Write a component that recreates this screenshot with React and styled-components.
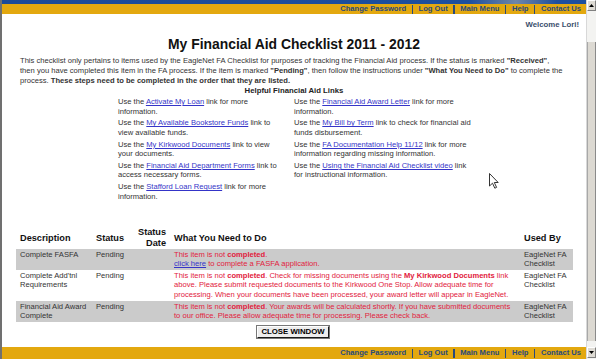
import React from "react";
import styled, { createGlobalStyle } from "styled-components";

const GlobalStyle = createGlobalStyle`
  html, body { margin: 0; padding: 0; }
  body {
    font-family: "Liberation Sans", Arial, sans-serif;
    background: #ffffff;
    overflow: hidden;
  }
`;

const Frame = styled.div`
  position: relative;
  display: flex;
  width: 596px;
  height: 359px;
  overflow: hidden;
  background: #fff;
`;

const LeftEdge = styled.div`
  width: 2px;
  background: #707070;
  flex: none;
`;

const Page = styled.div`
  flex: 1;
  min-width: 0;
  display: flex;
  flex-direction: column;
`;

const TopBand = styled.div`
  height: 4px;
  background: linear-gradient(90deg, #1b4a98 0%, #1d4f9e 80%, #6f86a8 88%, #1d4f9e 95%);
`;

const NavBar = styled.nav`
  display: flex;
  justify-content: flex-end;
  align-items: center;
  height: ${(p) => (p.$bottom ? "12px" : "10px")};
  padding-right: 5px;
  background: #e3a80f;
  margin-top: ${(p) => (p.$bottom ? "auto" : "0")};
`;

const NavLink = styled.a`
  font-size: 7.6px;
  font-weight: bold;
  color: #284a7c;
  text-decoration: none;
  line-height: 10px;
  white-space: nowrap;
`;

const NavSep = styled.span`
  display: inline-block;
  width: 1.5px;
  height: 9px;
  background: #284a7c;
  margin: 0 5.5px;
`;

const Welcome = styled.div`
  text-align: right;
  padding-right: 7px;
  margin-top: 6px;
  font-size: 7.8px;
  font-weight: bold;
  color: #3a4e6c;
  line-height: 10px;
`;

const Title = styled.h1`
  margin: 6px 0 0;
  text-align: center;
  font-size: 13.9px;
  font-weight: bold;
  color: #111;
  line-height: 16px;
`;

const Intro = styled.p`
  margin: 4px 0 0;
  padding-left: 18px;
  font-size: 7.6px;
  line-height: 10px;
  color: #333;
  white-space: nowrap;
`;

const LinksHeading = styled.div`
  text-align: center;
  font-size: 7.75px;
  font-weight: bold;
  color: #222;
  line-height: 10px;
`;

const LinksGrid = styled.div`
  display: grid;
  grid-template-columns: 170px 176px;
  column-gap: 6px;
  justify-content: center;
  margin-top: 1px;
`;

const LinkCol = styled.div`
  display: flex;
  flex-direction: column;
  gap: 2.3px;
`;

const LinkItem = styled.div`
  font-size: 7.6px;
  line-height: 9.5px;
  color: #333;
  white-space: nowrap;
`;

const A = styled.a`
  color: #3434c8;
  text-decoration: underline;
`;

const Table = styled.div`
  margin: 26px 0 0 14px;
  width: 557px;
`;

const Row = styled.div`
  display: grid;
  grid-template-columns: 76px 42px 36px 350px 53px;
  background: ${(p) => (p.$shaded ? "#cbcbcb" : "transparent")};
  padding: ${(p) => (p.$head ? "0" : "1px 0")};
  align-items: ${(p) => (p.$head ? "center" : "start")};
`;

const HeadCell = styled.div`
  padding: 0 4px;
  font-size: 9.2px;
  font-weight: bold;
  line-height: 10.7px;
  color: #111;
  text-align: ${(p) => (p.$right ? "right" : "left")};
  white-space: nowrap;
`;

const Cell = styled.div`
  padding: 0 4px;
  font-size: 7.6px;
  line-height: 9.6px;
  color: ${(p) => (p.$alert ? "#e2213d" : "#333")};
  white-space: ${(p) => (p.$nowrap ? "nowrap" : "normal")};
`;

const ButtonRow = styled.div`
  display: flex;
  justify-content: center;
  margin-top: 4px;
  padding-right: 2px;
`;

const CloseButton = styled.button`
  font-family: "Liberation Sans", Arial, sans-serif;
  font-size: 7.8px;
  font-weight: bold;
  color: #000;
  height: 12px;
  padding: 0 3px;
  line-height: 9px;
  background: #ededed;
  border: 1px solid;
  border-color: #fff #1a1a1a #1a1a1a #fff;
  box-shadow: 0 0 0 1px #777;
  cursor: default;
`;

const Scrollbar = styled.div`
  width: 10px;
  flex: none;
  display: flex;
  flex-direction: column;
  background: #f3f3f1;
  border-left: 1px solid #d8d8d8;
  box-sizing: border-box;
`;

const ScrollArrow = styled.div`
  height: 11px;
  display: flex;
  align-items: center;
  justify-content: center;
  background: #dedbd4;
  border: 1px solid;
  border-color: #fff #808080 #808080 #fff;
  box-sizing: border-box;
  margin-top: ${(p) => (p.$down ? "6px" : "0")};
`;

const ScrollThumb = styled.div`
  margin-top: 31px;
  height: 299px;
  background: #dcd9d2;
  border-left: 1px solid #a8a8a8;
  border-right: 1px solid #8a8a8a;
  box-sizing: border-box;
`;

const Cursor = styled.svg`
  position: absolute;
  left: 489px;
  top: 173px;
  pointer-events: none;
`;

const Strong = styled.b`
  font-weight: bold;
`;

function Nav({ bottom }) {
  const items = ["Change Password", "Log Out", "Main Menu", "Help", "Contact Us"];
  return (
    <NavBar $bottom={bottom}>
      {items.map((t, i) => (
        <React.Fragment key={t}>
          {i > 0 && <NavSep />}
          <NavLink href="#">{t}</NavLink>
        </React.Fragment>
      ))}
    </NavBar>
  );
}

const Tri = ({ down }) => (
  <svg width="5" height="3" viewBox="0 0 5 3">
    <path d={down ? "M0 0 H5 L2.5 3 Z" : "M0 3 H5 L2.5 0 Z"} fill="#000" />
  </svg>
);

export default function App() {
  return (
    <>
      <GlobalStyle />
      <Frame>
        <LeftEdge />
        <Page>
          <TopBand />
          <Nav />
          <Welcome>Welcome Lori!</Welcome>
          <Title>My Financial Aid Checklist 2011 - 2012</Title>
          <Intro>
            This checklist only pertains to items used by the EagleNet FA Checklist for purposes of tracking the Financial Aid process. If the status is marked <Strong>"Received"</Strong>,
            <br />
            then you have completed this item in the FA process. If the item is marked <Strong>"Pending"</Strong>, then follow the instructions under <Strong>"What You Need to Do"</Strong> to complete the
            <br />
            process. <Strong>These steps need to be completed in the order that they are listed.</Strong>
          </Intro>
          <LinksHeading>Helpful Financial Aid Links</LinksHeading>
          <LinksGrid>
            <LinkCol>
              <LinkItem>Use the <A href="#">Activate My Loan</A> link for more<br />information.</LinkItem>
              <LinkItem>Use the <A href="#">My Available Bookstore Funds</A> link to<br />view available funds.</LinkItem>
              <LinkItem>Use the <A href="#">My Kirkwood Documents</A> link to view<br />your documents.</LinkItem>
              <LinkItem>Use the <A href="#">Financial Aid Department Forms</A> link to<br />access necessary forms.</LinkItem>
              <LinkItem>Use the <A href="#">Stafford Loan Request</A> link for more<br />information.</LinkItem>
            </LinkCol>
            <LinkCol>
              <LinkItem>Use the <A href="#">Financial Aid Award Letter</A> link for more<br />information.</LinkItem>
              <LinkItem>Use the <A href="#">My Bill by Term</A> link to check for financial aid<br />funds disbursement.</LinkItem>
              <LinkItem>Use the <A href="#">FA Documentation Help 11/12</A> link for more<br />information regarding missing information.</LinkItem>
              <LinkItem>Use the <A href="#">Using the Financial Aid Checklist video</A> link<br />for instructional information.</LinkItem>
            </LinkCol>
          </LinksGrid>
          <Table>
            <Row $head>
              <HeadCell>Description</HeadCell>
              <HeadCell>Status</HeadCell>
              <HeadCell $right>Status<br />Date</HeadCell>
              <HeadCell>What You Need to Do</HeadCell>
              <HeadCell>Used By</HeadCell>
            </Row>
            <Row $shaded>
              <Cell>Complete FASFA</Cell>
              <Cell>Pending</Cell>
              <Cell />
              <Cell $alert $nowrap>
                This item is not <Strong>completed</Strong>.<br />
                <A href="#">click here</A> to complete a FASFA application.
              </Cell>
              <Cell>EagleNet FA Checklist</Cell>
            </Row>
            <Row>
              <Cell>Complete Add'tnl Requirements</Cell>
              <Cell>Pending</Cell>
              <Cell />
              <Cell $alert $nowrap>
                This item is not <Strong>completed</Strong>. Check for missing documents using the <Strong>My Kirkwood Documents</Strong> link<br />
                above. Please submit requested documents to the Kirkwood One Stop. Allow adequate time for<br />
                processing. When your documents have been processed, your award letter will appear in EagleNet.
              </Cell>
              <Cell>EagleNet FA Checklist</Cell>
            </Row>
            <Row $shaded>
              <Cell>Financial Aid Award Complete</Cell>
              <Cell>Pending</Cell>
              <Cell />
              <Cell $alert $nowrap>
                This item is not <Strong>completed</Strong>. Your awards will be calculated shortly. If you have submitted documents<br />
                to our office. Please allow adequate time for processing. Please check back.
              </Cell>
              <Cell>EagleNet FA Checklist</Cell>
            </Row>
          </Table>
          <ButtonRow>
            <CloseButton type="button">CLOSE WINDOW</CloseButton>
          </ButtonRow>
          <Nav bottom />
        </Page>
        <Scrollbar>
          <ScrollArrow><Tri /></ScrollArrow>
          <ScrollThumb />
          <ScrollArrow $down><Tri down /></ScrollArrow>
        </Scrollbar>
        <Cursor width="10" height="16" viewBox="0 0 10 16">
          <path d="M0.5 0.5 L0.5 13 L3.5 10.2 L5.8 15.2 L7.6 14.4 L5.3 9.5 L9.2 9.5 Z" fill="#fff" stroke="#333" strokeWidth="1" />
        </Cursor>
      </Frame>
    </>
  );
}
